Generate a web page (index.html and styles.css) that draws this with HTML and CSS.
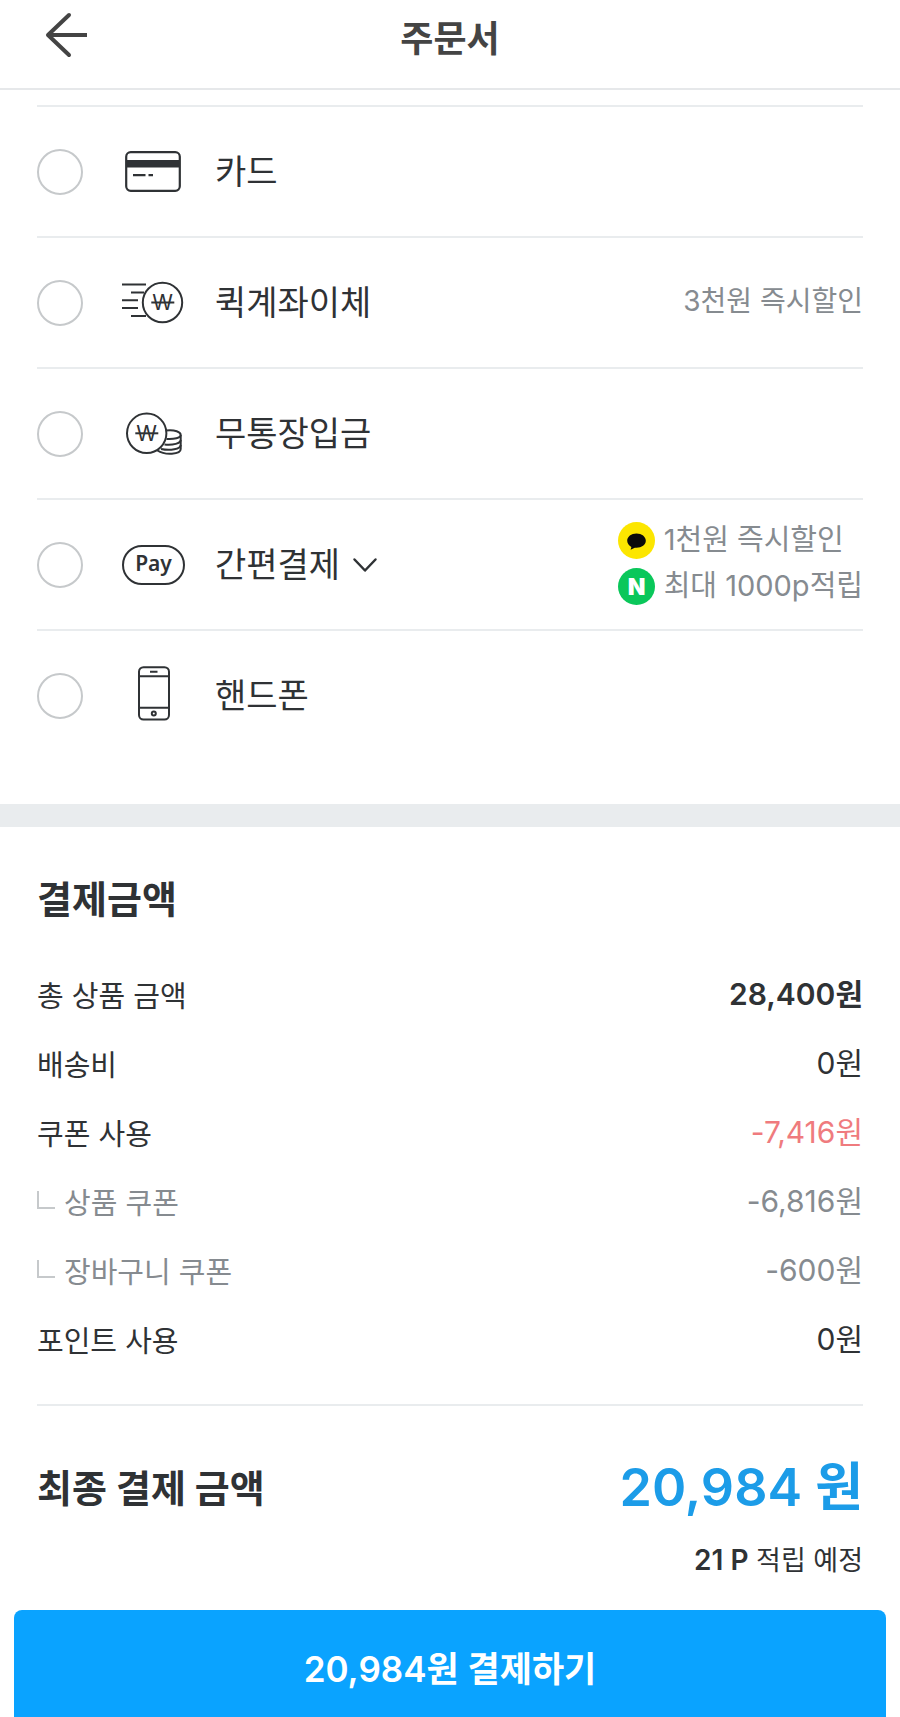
FILE: index.html
```html
<!DOCTYPE html>
<html lang="ko">
<head>
  <meta charset="UTF-8" />
  <meta name="viewport" content="width=device-width, initial-scale=1.0"/>
  <title>주문서</title>
  <link rel="stylesheet" href="styles.css">
</head>
<body>
  <header class="header">
    <button type="button" class="back" aria-label="뒤로">
      <svg width="44" height="46" viewBox="0 0 44 46" fill="none" stroke="#444" stroke-width="4" stroke-linecap="round" stroke-linejoin="round">
        <path d="M25 3L4 23l21 20"/>
        <path d="M5 23h36" stroke-linecap="square"/>
      </svg>
    </button>
    <h1>주문서</h1>
  </header>

  <form class="order">
    <!-- Payment methods -->
    <section class="methods">
      <div class="method">
        <input type="radio" name="pay" id="card">
        <label for="card">
          <svg class="icon" width="64" height="48" viewBox="0 0 64 48" fill="none" stroke="#2f3235" stroke-width="2.2" aria-hidden="true">
            <rect x="5.2" y="4.2" width="53.6" height="38.6" rx="4.5"/>
            <path d="M5 15.7h54" stroke-width="7.5"/>
            <path d="M12 27.2h12.5M27.5 27.2h4.5"/>
          </svg>
          카드
        </label>
      </div>

      <div class="method">
        <input type="radio" name="pay" id="quick">
        <label for="quick">
          <svg class="icon" width="64" height="48" viewBox="0 0 64 48" fill="none" stroke="#2f3235" stroke-width="2" aria-hidden="true">
            <circle cx="41.5" cy="23.5" r="19.7"/>
            <path d="M1 5.5h24M10 13.5h13M1 21.3h16M1 29h16M10 37h15M30.3 23.5h23"/>
            <text class="won" x="41.5" y="31">W</text>
          </svg>
          퀵계좌이체
        </label>
        <p class="benefit">3천원 즉시할인</p>
      </div>

      <div class="method">
        <input type="radio" name="pay" id="bank">
        <label for="bank">
          <svg class="icon" width="64" height="48" viewBox="0 0 64 48" fill="none" stroke="#2f3235" stroke-width="2" aria-hidden="true">
            <circle cx="25.7" cy="23.3" r="19.7"/>
            <path d="M45 20.5C54 19.500 59.7 22 59.7 25V39C59.7 44.5 44 45.5 36.5 40.5"/>
            <path d="M59.7 25C59.7 28 53 29.5 45.5 29M59.7 30C59.7 33.5 52 35.3 43.5 34.5M59.7 35C59.7 39.2 49 41 40 39"/>
            <path d="M14.3 23.3h23"/>
            <text class="won" x="25.7" y="31">W</text>
          </svg>
          무통장입금
        </label>
      </div>

      <div class="method">
        <input type="radio" name="pay" id="easy">
        <label for="easy">
          <svg class="icon" width="64" height="48" viewBox="0 0 64 48" fill="none" stroke="#2f3235" stroke-width="2" aria-hidden="true">
            <rect x="2" y="5" width="61" height="38" rx="19"/>
            <text class="pay" x="32.5" y="30">Pay</text>
          </svg>
          간편결제
        </label>
        <button type="button" class="expand" aria-label="간편결제 펼치기">
          <svg width="26" height="16" viewBox="0 0 26 16" fill="none" stroke="#2f3235" stroke-width="2.5" stroke-linecap="round" stroke-linejoin="round">
            <path d="M2.5 2.5L13 13.5 23.5 2.5"/>
          </svg>
        </button>
        <ul class="benefit brands">
          <li>
            <svg width="37" height="37" viewBox="0 0 37 37" aria-hidden="true">
              <circle cx="18.5" cy="18.5" r="18.5" fill="#fce600"/>
              <path d="M18.5 11.5c-5.200 0-9.300 3.200-9.300 7.300 0 2.600 1.700 4.800 4.200 6.100l-.8 2.900 4.200-2.100c6 .7 11-2.500 11-6.900 0-4.100-4.100-7.300-9.300-7.300z" fill="#0a0a0a"/>
            </svg>
            <span>1천원 즉시할인</span>
          </li>
          <li>
            <svg width="37" height="37" viewBox="0 0 37 37" aria-hidden="true">
              <circle cx="18.5" cy="18.5" r="18.5" fill="#0ac75a"/>
              <text class="naver" x="18.5" y="27">N</text>
            </svg>
            <span>최대 1000p적립</span>
          </li>
        </ul>
      </div>

      <div class="method">
        <input type="radio" name="pay" id="phone">
        <label for="phone">
          <svg class="icon" width="64" height="60" viewBox="0 0 64 60" fill="none" stroke="#2f3235" stroke-width="2" aria-hidden="true">
            <rect x="18" y="1.2" width="30" height="52.3" rx="4.5"/>
            <path d="M18 10.2h30M18 41.8h30M29 5.8h7.5"/>
            <circle cx="32.8" cy="47.5" r="2"/>
          </svg>
          핸드폰
        </label>
      </div>
    </section>

    <!-- Price summary -->
    <section class="summary">
      <h2>결제금액</h2>
      <dl class="prices">
        <div class="strong"><dt>총 상품 금액</dt><dd>28,400원</dd></div>
        <div><dt>배송비</dt><dd>0원</dd></div>
        <div class="minus"><dt>쿠폰 사용</dt><dd>-7,416원</dd></div>
        <div class="sub"><dt>상품 쿠폰</dt><dd>-6,816원</dd></div>
        <div class="sub"><dt>장바구니 쿠폰</dt><dd>-600원</dd></div>
        <div><dt>포인트 사용</dt><dd>0원</dd></div>
      </dl>
      <div class="total">
        <h2>최종 결제 금액</h2>
        <strong>20,984 원</strong>
      </div>
      <p class="point"><b>21 P</b> 적립 예정</p>
    </section>

    <button type="submit" class="submit">20,984원 결제하기</button>
  </form>
</body>
</html>
```

FILE: styles.css
```css
* {
  box-sizing: border-box;
}

body {
  font-family: Inter, "Noto Sans CJK KR", sans-serif;
  margin: 0;
  background: #fff;
  color: #2f3235;
}

h1, h2, p, ul, dl, dd {
  margin: 0;
  padding: 0;
}

button {
  font-family: inherit;
  padding: 0;
  border: none;
  background: none;
  cursor: pointer;
}

svg {
  display: block;
  flex: none;
}

.header {
  display: grid;
  grid-template-columns: 1fr auto 1fr;
  align-items: start;
  padding: 12px 44px 22px;
  border-bottom: 2px solid #e6e8ea;
}

.back {
  justify-self: start;
}

.header h1 {
  font-size: 36px;
  line-height: 54px;
  color: #444;
}

/* Payment methods */
.methods {
  padding: 15px 37px 44px;
  border-bottom: 23px solid #e9ecee;
}

.method {
  display: flex;
  align-items: center;
  height: 131px;
  border-top: 2px solid #e9ecee;
}

.method input {
  appearance: none;
  flex: none;
  width: 46px;
  height: 46px;
  margin: 0 38px 0 0;
  border: 2px solid #c6c9cb;
  border-radius: 50%;
}

.method input:checked {
  border: 14px solid #0aa3ff;
}

.method label {
  display: flex;
  align-items: center;
  gap: 30px;
  font-size: 34px;
  line-height: 48px;
}

.won,
.pay,
.naver {
  text-anchor: middle;
  stroke: none;
  fill: #2f3235;
}

.won {
  font-size: 21px;
}

.pay {
  font-family: "Noto Sans", sans-serif;
  font-size: 21px;
  font-weight: 600;
}

.naver {
  font-size: 23px;
  font-weight: 900;
  fill: #fff;
}

.expand {
  margin-left: 12px;
}

.benefit {
  margin-left: auto;
  padding-bottom: 3px;
  list-style: none;
  font-size: 28px;
  line-height: 46px;
  color: #868b90;
}

.brands {
  font-size: 29px;
}

.brands li {
  display: flex;
  align-items: center;
  gap: 9px;
}

/* Price summary */
.summary {
  padding: 48px 37px 30px;
}

.summary h2 {
  font-size: 38px;
  line-height: 48px;
}

.prices {
  margin-top: 37px;
  padding-bottom: 30px;
  border-bottom: 2px solid #e9ecee;
  font-size: 30px;
  line-height: 69px;
}

.prices div {
  display: flex;
  justify-content: space-between;
}

.prices dt {
  font-family: "Noto Sans CJK KR", sans-serif;
  font-size: 29px;
}

.strong dd {
  font-weight: 600;
}

.minus dd {
  color: #ef7b7e;
}

.sub {
  color: #868b90;
}

.sub dt {
  display: flex;
  align-items: center;
}

.sub dt::before {
  content: "";
  width: 16px;
  height: 16px;
  margin: 0 9px 4px 0;
  border-left: 2px solid #c6c9cb;
  border-bottom: 2px solid #c6c9cb;
}

.total {
  display: flex;
  justify-content: space-between;
  align-items: center;
  padding-top: 50px;
}

.total strong {
  font-size: 52px;
  font-weight: 600;
  line-height: 64px;
  color: #1c9ce8;
}

.point {
  margin-top: 19px;
  font-family: "Noto Sans CJK KR", sans-serif;
  font-size: 27px;
  line-height: 40px;
  text-align: right;
}

.point b {
  font-family: Inter, sans-serif;
  font-size: 28px;
  font-weight: 600;
}

.submit {
  display: block;
  width: calc(100% - 28px);
  margin: 0 14px;
  padding: 35px 0 25px;
  border-radius: 8px 8px 0 0;
  background: #0aa3ff;
  color: #fff;
  font-size: 35px;
  font-weight: 600;
  line-height: 48px;
}
```
